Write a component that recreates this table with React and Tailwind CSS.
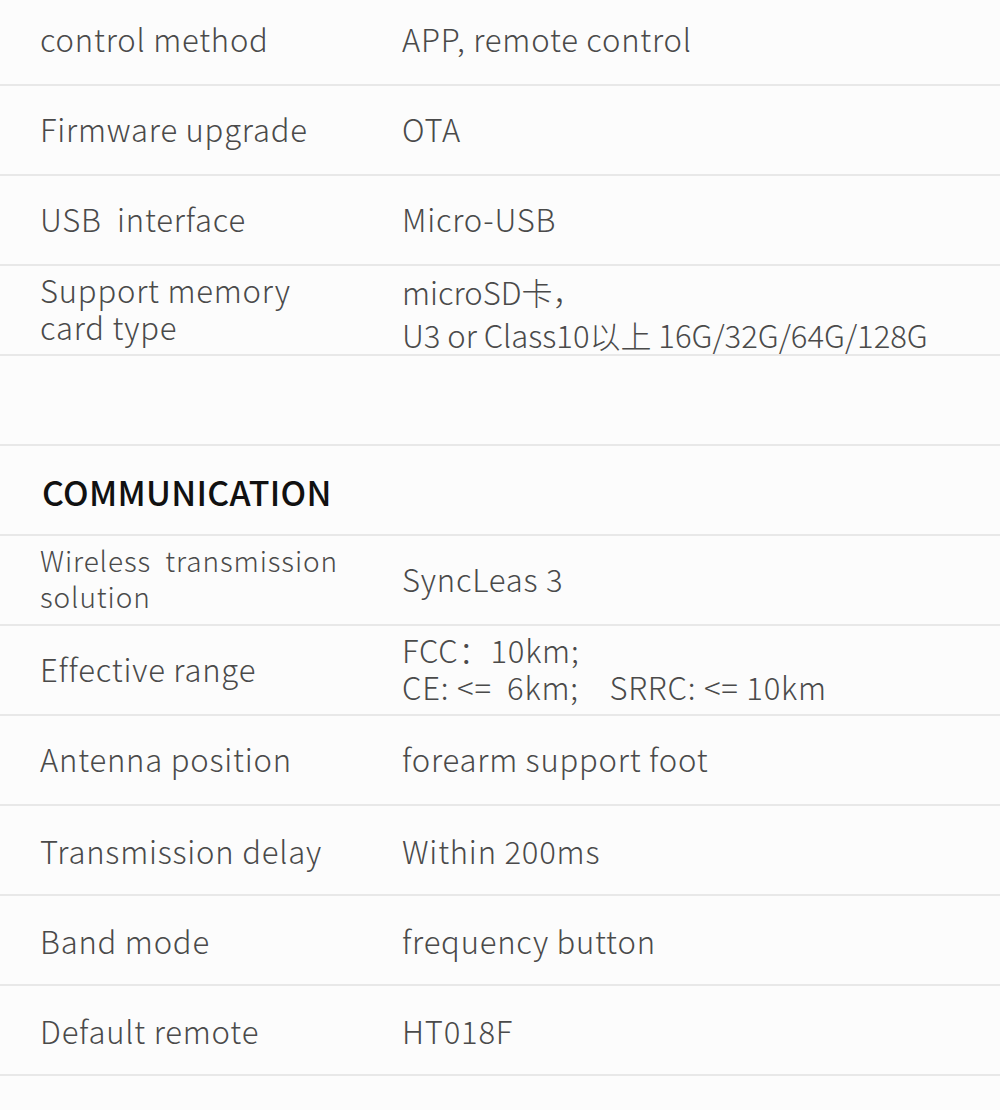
const rowsTop = [
  { label: 'control method', value: ['APP, remote control'] },
  { label: 'Firmware upgrade', value: ['OTA'] },
  { label: 'USB  interface', value: ['Micro-USB'] },
  { label: ['Support memory', 'card type'], value: ['microSD卡，', 'U3 or Class10以上 16G/32G/64G/128G'], tall: true },
];

const rowsComm = [
  { label: ['Wireless  transmission', 'solution'], value: ['SyncLeas 3'], small: true },
  { label: 'Effective range', value: ['FCC：10km;', 'CE: <=  6km;    SRRC: <= 10km'] },
  { label: 'Antenna position', value: ['forearm support foot'] },
  { label: 'Transmission delay', value: ['Within 200ms'], low: true },
  { label: 'Band mode', value: ['frequency button'], low: true },
  { label: 'Default remote', value: ['HT018F'], low: true },
];

function Row({ row, first }) {
  const label = Array.isArray(row.label) ? row.label : [row.label];
  return (
    <div className={`flex items-center border-b-2 border-[#e8e8e8] pl-[40px] ${first ? 'h-[86px] pb-[8px]' : row.low ? 'h-[90px] pt-[1px]' : 'h-[90px] pb-[4px]'}`}>
      <div className={`w-[362px] shrink-0 whitespace-pre ${row.small ? 'text-[28px] leading-[36px] tracking-[0.9px]' : 'text-[31px] leading-[37px] tracking-[0.8px]'}`}>
        {label.map((l, i) => <div key={i}>{l}</div>)}
      </div>
      <div className={`text-[31px] whitespace-pre ${row.tall ? 'leading-[43px] mt-[10px]' : 'leading-[37px] tracking-[0.8px]'}`}>
        {row.value.map((v, i) => <div key={i}>{v}</div>)}
      </div>
    </div>
  );
}

export default function App() {
  return (
    <div className="w-[1000px] h-[1110px] overflow-hidden bg-[#fcfcfc] text-[#4a4a4a] font-light font-['Noto_Sans_CJK_SC','Noto_Sans',sans-serif]">
      {rowsTop.map((r, i) => <Row key={i} row={r} first={i === 0} />)}

      {/* blank spacer row */}
      <div className="h-[90px] border-b-2 border-[#e8e8e8]" />

      <div className="h-[90px] flex items-center pl-[42px] pt-[2px] border-b-2 border-[#e8e8e8]">
        <h2 className="text-[34px] font-medium text-[#111] tracking-[0.3px]">COMMUNICATION</h2>
      </div>

      {rowsComm.map((r, i) => <Row key={i} row={r} />)}
    </div>
  );
}
